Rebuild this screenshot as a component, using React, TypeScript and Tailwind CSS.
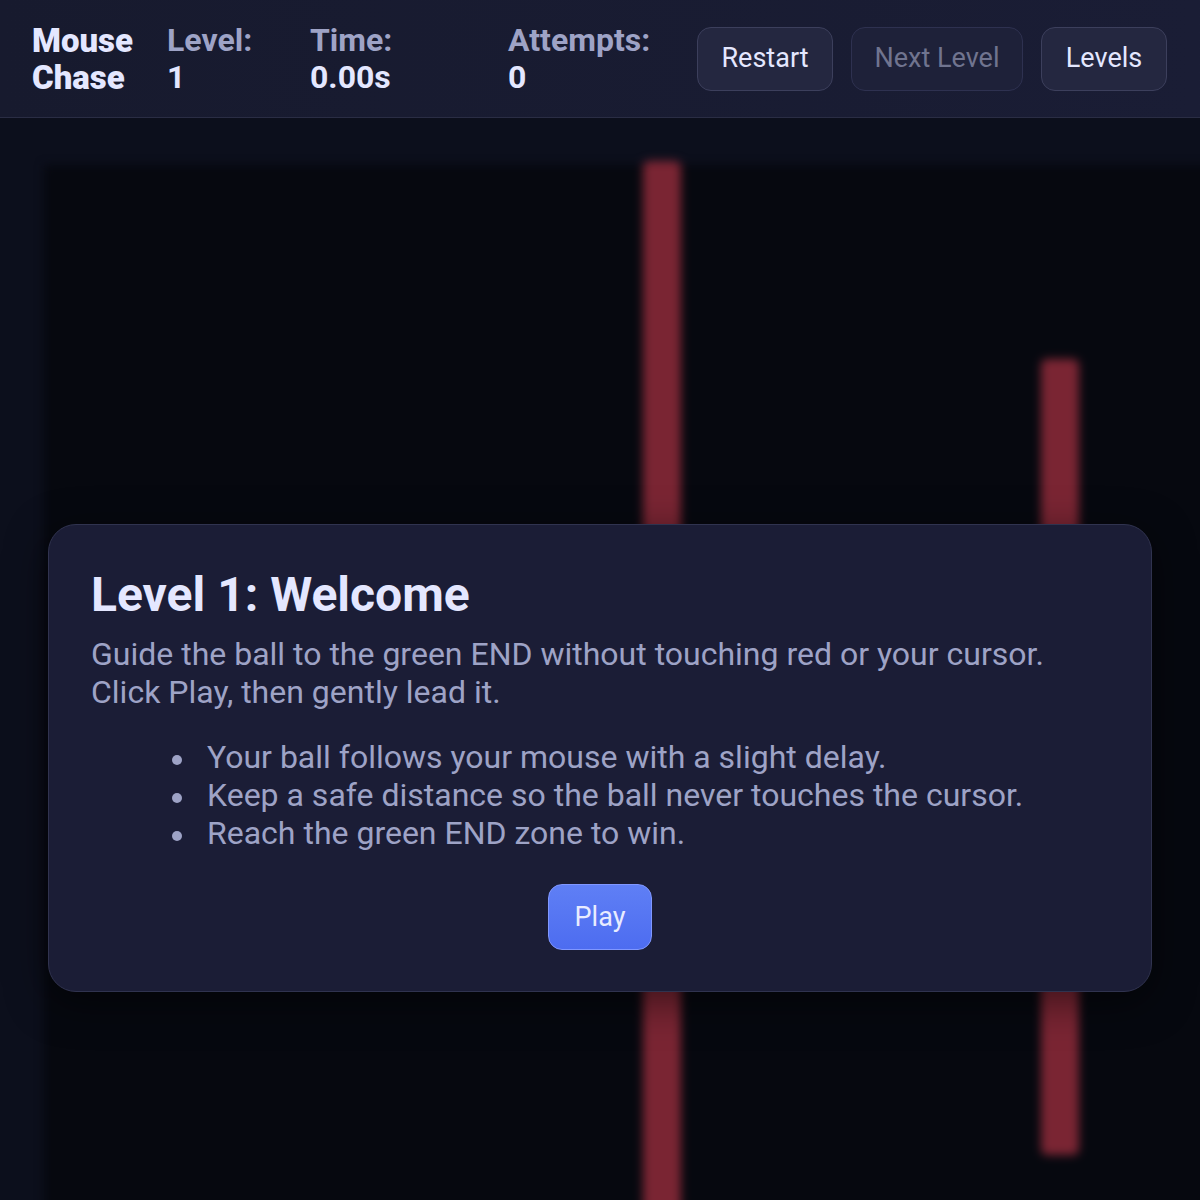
import React from "react";

const font = { fontFamily: "Roboto, 'Noto Sans', sans-serif" };

function Stat({ label, value, w }: { label: string; value: string; w: string }) {
  return (
    <div className={`${w} flex flex-col text-[32px] leading-[37px] font-bold`}>
      <span className="text-[#9ea3c6]">{label}</span>
      <span className="text-[#e4e7ff]">{value}</span>
    </div>
  );
}

const items = [
  "Your ball follows your mouse with a slight delay.",
  "Keep a safe distance so the ball never touches the cursor.",
  "Reach the green END zone to win.",
];

export default function App() {
  return (
    <div style={font} className="relative w-[1200px] h-[1200px] overflow-hidden bg-[#0c0f1c]">
      <header className="h-[118px] flex items-center pl-[32px] pr-[33px] bg-gradient-to-r from-[#171a2e] to-[#1a1d35] border-b border-[#2a2d44]">
        <div className="w-[135px] text-[33px] leading-[37px] font-black text-[#e4e7ff]">
          <div>Mouse</div>
          <div>Chase</div>
        </div>
        <Stat label="Level:" value="1" w="w-[143px]" />
        <Stat label="Time:" value="0.00s" w="w-[198px]" />
        <Stat label="Attempts:" value="0" w="flex-1" />
        <div className="flex gap-[18px]">
          <button className="h-[64px] w-[136px] rounded-[14px] border border-[#3c3f5c] bg-[#242740] text-[27px] text-[#e4e7ff]">
            Restart
          </button>
          <button className="h-[64px] w-[172px] rounded-[14px] border border-[#2e3150] bg-[#1e2139] text-[27px] text-[#70748f]">
            Next Level
          </button>
          <button className="h-[64px] w-[126px] rounded-[14px] border border-[#3c3f5c] bg-[#242740] text-[27px] text-[#e4e7ff]">
            Levels
          </button>
        </div>
      </header>

      <main className="pl-[44px] pt-[47px]">
        <div className="relative w-[1200px] h-[1100px] bg-[#06080f] blur-[5px]">
          <div className="absolute left-[599px] top-[-4px] w-[38px] h-[1104px] rounded-[6px] bg-[#7a2533]" />
          <div className="absolute left-[997px] top-[194px] w-[38px] h-[796px] rounded-[6px] bg-[#7a2533]" />
        </div>
      </main>

      <div className="absolute left-[48px] top-[524px] w-[1104px] rounded-[28px] border border-[#30334f] bg-[#1b1d36] p-[42px] pb-[41px] shadow-[0_10px_40px_rgba(0,0,0,0.5)]">
        <h2 className="text-[48px] leading-[56px] font-bold text-[#e4e7ff]">Level 1: Welcome</h2>
        <p className="mt-[12px] text-[32px] leading-[38px] text-[#9ea3c6]">
          Guide the ball to the green END without touching red or your cursor. Click Play, then gently lead it.
        </p>
        <ul className="mt-[27px] pl-[81px] text-[32px] leading-[38px] text-[#9ea3c6]">
          {items.map((t) => (
            <li key={t} className="flex items-start">
              <span className="w-[35px] shrink-0 pt-[17px]">
                <span className="block w-[10px] h-[10px] rounded-full bg-[#9ea3c6]" />
              </span>
              <span>{t}</span>
            </li>
          ))}
        </ul>
        <div className="mt-[32px] flex justify-center">
          <button className="h-[66px] w-[104px] rounded-[14px] border border-[#8097ff] bg-gradient-to-b from-[#5f7ff5] to-[#4d6cf0] text-[27px] text-[#e8ecff]">
            Play
          </button>
        </div>
      </div>
    </div>
  );
}
